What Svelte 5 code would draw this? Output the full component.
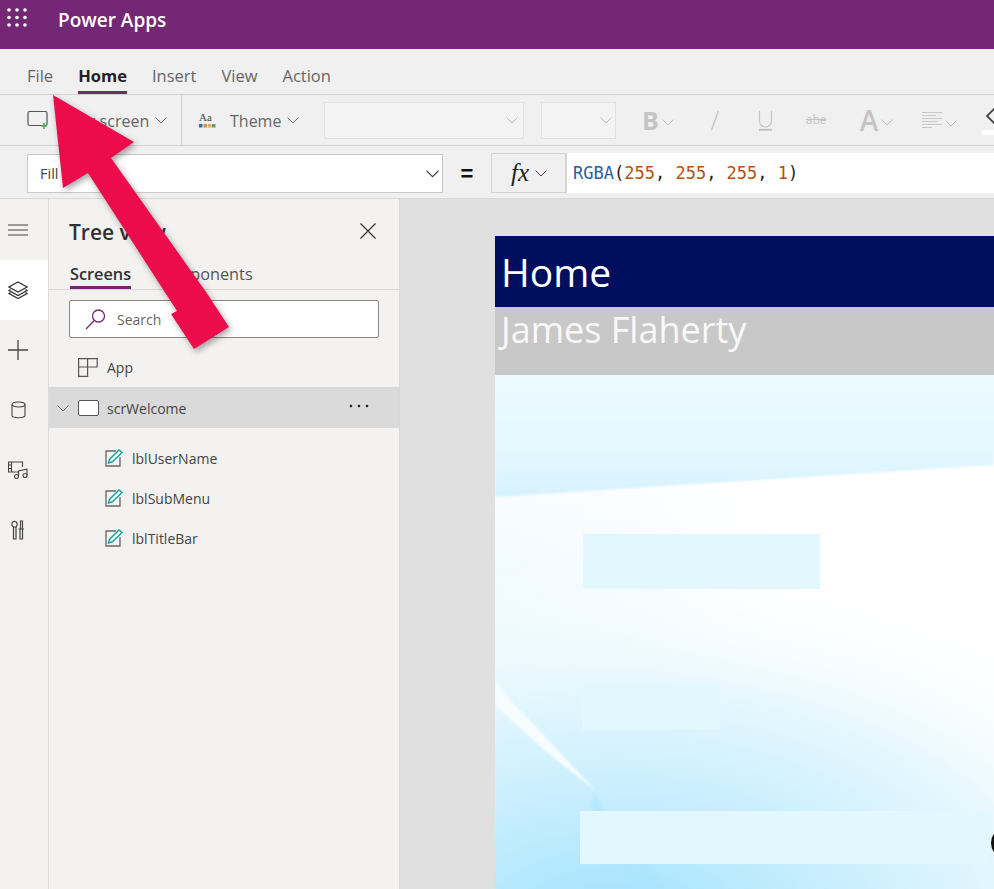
<script>
	const tabs = ['File', 'Home', 'Insert', 'View', 'Action'];
	const labels = ['lblUserName', 'lblSubMenu', 'lblTitleBar'];
	const dots = [0, 1, 2];
</script>

<div class="page">
	<header class="topbar">
		<svg class="launcher" width="20" height="20" viewBox="0 0 20 20">
			{#each dots as r}
				{#each dots as c}
					<circle cx={2 + c * 8} cy={2 + r * 7.500} r="1.800" fill="#fff" />
				{/each}
			{/each}
		</svg>
		<span class="brand">Power Apps</span>
	</header>

	<nav class="tabs">
		{#each tabs as tab}
			<span class="tab" class:active={tab === 'Home'}>{tab}</span>
		{/each}
	</nav>

	<div class="toolbar">
		<div class="group first">
			<svg width="22" height="20" viewBox="0 0 22 20" fill="none">
				<rect x="1" y="1.500" width="19" height="14" rx="1.500" stroke="#555" stroke-width="1.200" />
				<path d="M17 13v6M14 16h6" stroke="#4caf50" stroke-width="1.600" />
			</svg>
			<span class="label newscreen">New screen</span>
			<svg class="chev" width="12" height="7" viewBox="0 0 12 7"><path d="M.5.5 6 6l5.500-5.500" /></svg>
		</div>
		<div class="group second">
			<svg width="17" height="18" viewBox="0 0 17 18">
				<text x="0" y="10" class="aa">Aa</text>
				<rect x="0" y="13" width="3.500" height="3.500" fill="#3c6db0" />
				<rect x="4.500" y="13" width="3.500" height="3.500" fill="#d98f45" />
				<rect x="9" y="13" width="3.500" height="3.500" fill="#e0a860" />
				<rect x="13" y="13" width="3.500" height="3.500" fill="#5c9a7c" />
			</svg>
			<span class="label theme">Theme</span>
			<svg class="chev" width="12" height="7" viewBox="0 0 12 7"><path d="M.5.5 6 6l5.500-5.500" /></svg>
		</div>
		<div class="select wide">
			<svg class="chev light" width="12" height="7" viewBox="0 0 12 7"><path d="M.5.5 6 6l5.500-5.500" /></svg>
		</div>
		<div class="select narrow">
			<svg class="chev light" width="12" height="7" viewBox="0 0 12 7"><path d="M.5.5 6 6l5.500-5.500" /></svg>
		</div>
		<span class="fmt bold">B</span>
		<svg class="chev light after-b" width="12" height="7" viewBox="0 0 12 7"><path d="M.5.5 6 6l5.500-5.500" /></svg>
		<svg class="italic" width="10" height="21" viewBox="0 0 10 21"><path d="M8.500 1 1.500 20" stroke="#c4c4c4" stroke-width="1.400" /></svg>
		<svg class="under" width="15" height="21" viewBox="0 0 15 21" fill="none">
			<path d="M1.500 1v10a6 6 0 0 0 12 0V1" stroke="#c4c4c4" stroke-width="1.200" />
			<path d="M1 19.800h13" stroke="#bdbdbd" stroke-width="1.800" />
		</svg>
		<span class="fmt abe">abe</span>
		<span class="fmt big-a">A</span>
		<svg class="chev light after-a" width="12" height="7" viewBox="0 0 12 7"><path d="M.5.5 6 6l5.500-5.500" /></svg>
		<svg class="align" width="21" height="16" viewBox="0 0 21 16">
			<path d="M0 .5h20M0 3.500h14M0 6.500h20M0 9.500h16M0 12.500h20M0 15.500h10" stroke="#c8c8c8" />
		</svg>
		<svg class="chev light after-align" width="12" height="7" viewBox="0 0 12 7"><path d="M.5.5 6 6l5.500-5.500" /></svg>
		<div class="fill-icon">
			<svg width="10" height="22" viewBox="0 0 10 22" fill="none">
				<path d="M9 1 1 9l8 8" stroke="#444" stroke-width="1.800" />
			</svg>
			<span class="fill-swatch"></span>
		</div>
	</div>

	<div class="formula">
		<div class="prop">
			<span>Fill</span>
			<svg class="chev dark" width="13" height="8" viewBox="0 0 12 7"><path d="M.5.5 6 6l5.500-5.500" /></svg>
		</div>
		<span class="equals">=</span>
		<div class="fx">
			<i>fx</i>
			<svg class="chev dark" width="12" height="7" viewBox="0 0 12 7"><path d="M.5.5 6 6l5.500-5.500" /></svg>
		</div>
		<div class="code">
			<span class="fn">RGBA</span>(<span class="num">255</span>, <span class="num">255</span>, <span class="num">255</span>, <span class="num">1</span>)
		</div>
	</div>

	<div class="workspace">
		<aside class="rail">
			<div class="rail-item">
				<svg width="20" height="12" viewBox="0 0 20 12"><path d="M0 1h20M0 6h20M0 11h20" stroke="#444" /></svg>
			</div>
			<div class="rail-item current">
				<svg width="20" height="18" viewBox="0 0 20 18" fill="none" stroke="#333" stroke-width="1.200">
					<path d="m10 1 9 5-9 5-9-5z" />
					<path d="m2.500 8.500-1.500 1 9 5 9-5-1.500-1" />
					<path d="m2.500 11.500-1.500 1 9 5 9-5-1.500-1" />
				</svg>
			</div>
			<div class="rail-item">
				<svg width="20" height="20" viewBox="0 0 20 20"><path d="M10 0v20M0 10h20" stroke="#444" stroke-width="1.300" /></svg>
			</div>
			<div class="rail-item">
				<svg width="15" height="18" viewBox="0 0 15 18" fill="none" stroke="#444" stroke-width="1.100">
					<path d="M1 3.500v11c0 3 13 3 13 0v-11" />
					<ellipse cx="7.500" cy="3.500" rx="6.500" ry="2.500" />
				</svg>
			</div>
			<div class="rail-item">
				<svg width="20" height="18" viewBox="0 0 20 18" fill="none" stroke="#444" stroke-width="1.100">
					<path d="M10 11H.5V1h14v5" />
					<path d="M3.500 1v10M.5 4h3M.5 7.500h3" />
					<path d="M10.500 15.500V10l8.500-1.800v6" />
					<circle cx="8.500" cy="15.500" r="2" />
					<circle cx="17" cy="14.500" r="2" />
				</svg>
			</div>
			<div class="rail-item">
				<svg width="14" height="20" viewBox="0 0 14 20" fill="none" stroke="#444" stroke-width="1.200">
					<path d="M2.500 7V19h2.500V7" />
					<path d="M1 3a2.800 2.800 0 0 1 5 0v2.500l-1 1.500H2.500L1 5.500z" />
					<path d="M9 9v10h2.500V9M7.500 9h5.500M9.500 9V1h2v8" />
				</svg>
			</div>
		</aside>

		<section class="panel">
			<div class="panel-head">
				<h2>Tree view</h2>
				<svg class="close" width="18" height="18" viewBox="0 0 18 18"><path d="m1.500 1.500 15 15M16.500 1.500l-15 15" stroke="#333" stroke-width="1.200" /></svg>
			</div>
			<div class="panel-tabs">
				<span class="ptab on">Screens</span>
				<span class="ptab">Components</span>
			</div>
			<div class="search">
				<svg width="22" height="22" viewBox="0 0 22 22" fill="none" stroke="#742774" stroke-width="1.300">
					<circle cx="13.500" cy="8" r="6" />
					<path d="M9.300 12.500 1 21" />
				</svg>
				<span>Search</span>
			</div>
			<div class="row app">
				<svg width="20" height="19" viewBox="0 0 20 19" fill="none" stroke="#555" stroke-width="1.200">
					<path d="M.6.6h9v17.800h-9zM.6 9h18.600V.6H9.600" />
				</svg>
				<span>App</span>
			</div>
			<div class="row screen">
				<svg class="chev" width="12" height="7" viewBox="0 0 12 7"><path d="M.5.5 6 6l5.500-5.500" /></svg>
				<span class="screen-box"></span>
				<span>scrWelcome</span>
				<svg class="more" width="20" height="4" viewBox="0 0 20 4">
					<circle cx="2" cy="2" r="1.300" fill="#222" />
					<circle cx="10" cy="2" r="1.300" fill="#222" />
					<circle cx="18" cy="2" r="1.300" fill="#222" />
				</svg>
			</div>
			<ul class="children">
				{#each labels as name}
					<li>
						<svg width="18" height="18" viewBox="0 0 18 18" fill="none">
							<path d="M11 2H1v15h14V8" stroke="#666" stroke-width="1.300" />
							<path d="m3.500 14 1-3.500L14 1l3 2.500L7 13z" stroke="#1ba39c" stroke-width="1.500" fill="#fff" />
						</svg>
						<span>{name}</span>
					</li>
				{/each}
			</ul>
		</section>

		<main class="canvas">
			<div class="preview">
				<div class="title">Home</div>
				<div class="user">James Flaherty</div>
				<div class="body">
					<svg class="backdrop" width="499" height="514" viewBox="0 0 499 514" preserveAspectRatio="none">
						<defs>
							<linearGradient id="band" x1="0" y1="0" x2="0" y2="1">
								<stop offset="0" stop-color="#ebfaff" />
								<stop offset="0.6" stop-color="#e6f8ff" />
								<stop offset="1" stop-color="#d6f2fd" />
							</linearGradient>
							<radialGradient id="corner" gradientUnits="userSpaceOnUse" cx="90" cy="555" r="490" gradientTransform="translate(0 135) scale(1.300 .75)">
								<stop offset="0" stop-color="#9fe2fe" />
								<stop offset="0.3" stop-color="#c2ecfd" />
								<stop offset="0.65" stop-color="#e6f7fe" />
								<stop offset="1" stop-color="#ffffff" stop-opacity="0" />
							</radialGradient>
							<linearGradient id="side" x1="0" y1="0" x2="1" y2="0">
								<stop offset="0" stop-color="#e9f8ff" />
								<stop offset="0.5" stop-color="#f3fbff" />
								<stop offset="1" stop-color="#ffffff" stop-opacity="0" />
							</linearGradient>
							<linearGradient id="side-fade" x1="0" y1="0" x2="0" y2="1">
								<stop offset="0" stop-color="#fff" stop-opacity="0.7" />
								<stop offset="0.4" stop-color="#fff" stop-opacity="0" />
							</linearGradient>
							<filter id="soft"><feGaussianBlur stdDeviation="1.500" /></filter>
							<filter id="edge"><feGaussianBlur stdDeviation="0.800" /></filter>
						</defs>
						<rect width="499" height="514" fill="#fff" />
						<rect y="115" width="300" height="399" fill="url(#side)" />
						<rect y="115" width="300" height="399" fill="url(#side-fade)" />
						<rect width="499" height="514" fill="url(#corner)" />
						<polygon points="-5,-5 504,-5 499,90 250,106 0,122" fill="url(#band)" filter="url(#edge)" />
						<polygon points="0,305 20,330 60,372 100,415 50,376 0,330" fill="#f6fcff" filter="url(#edge)" />
						<polygon points="100,420 170,514 140,514 95,430" fill="#a8e4fe" opacity="0.45" filter="url(#soft)" />
					</svg>
					<div class="block one"></div>
					<div class="block two"></div>
					<div class="block three"></div>
					<span class="blob"></span>
				</div>
			</div>
		</main>
	</div>

	<svg class="arrow" width="260" height="380" viewBox="0 0 260 380">
		<polygon points="53,95 134,142 111,158 206,292 229,327 194,349 171,314 177,311 88,173 63,188" fill="#ec0c4c" />
	</svg>
</div>

<style>
	:global(body) {
		margin: 0;
		background: #f3f2f1;
	}

	.page {
		position: relative;
		width: 994px;
		height: 889px;
		overflow: hidden;
		font-family: "Open Sans", "Noto Sans", sans-serif;
		color: #333;
		display: flex;
		flex-direction: column;
	}

	.topbar {
		height: 49px;
		flex: none;
		background: #742774;
		display: flex;
		align-items: flex-start;
		color: #fff;
	}

	.launcher {
		margin: 8px 0 0 7px;
	}

	.brand {
		margin: 7px 0 0 31px;
		font-size: 19px;
		font-weight: 600;
		line-height: 26px;
	}

	.tabs {
		height: 45px;
		flex: none;
		background: #f0f0f0;
		border-bottom: 1px solid #d2d2d2;
		display: flex;
		padding-left: 27px;
		gap: 25px;
	}

	.tab {
		height: 28px;
		margin-top: 14px;
		font-size: 16.500px;
		line-height: 25px;
		color: #666;
		border-bottom: 3px solid transparent;
	}

	.tab.active {
		color: #222;
		font-weight: 700;
		border-bottom-color: #742774;
	}

	.toolbar {
		height: 50px;
		flex: none;
		background: #f0f0f0;
		border-bottom: 1px solid #d2d2d2;
		display: flex;
		align-items: center;
	}

	.toolbar > * {
		flex: none;
	}

	.group {
		height: 100%;
		display: flex;
		align-items: center;
		box-sizing: border-box;
	}

	.group.first {
		width: 182px;
		padding-left: 27px;
		border-right: 1px solid #d2d2d2;
	}

	.group.second {
		width: 142px;
		padding-left: 17px;
	}

	.label {
		font-size: 16px;
		line-height: 24px;
		padding-top: 2px;
		color: #666;
	}

	.newscreen {
		margin: 0 6px 0 13px;
	}

	.theme {
		margin: 0 6px 0 14px;
	}

	.chev {
		flex: none;
		fill: none;
		stroke: #777;
		stroke-width: 1;
	}

	.chev.light {
		stroke: #bdbdbd;
	}

	.chev.dark {
		stroke: #444;
	}

	.select {
		height: 37px;
		box-sizing: border-box;
		border: 1px solid #e2e2e2;
		background: #f3f3f3;
		display: flex;
		align-items: center;
		justify-content: flex-end;
		padding-right: 5px;
	}

	.wide {
		width: 200px;
	}

	.narrow {
		width: 75px;
		margin-left: 17px;
		padding-right: 3px;
	}

	.fmt {
		color: #c4c4c4;
		line-height: 1;
	}

	.bold {
		margin-left: 26px;
		font-size: 25px;
		font-weight: 700;
	}

	.after-b {
		margin: 4px 0 0 3px;
	}

	.italic {
		margin-left: 36px;
	}

	.under {
		margin-left: 38px;
	}

	.abe {
		margin-left: 33px;
		width: 20px;
		font-size: 12px;
		text-decoration: line-through;
	}

	.big-a {
		margin-left: 34px;
		font-size: 28px;
		font-weight: 600;
	}

	.after-a {
		margin: 4px 0 0 3px;
	}

	.align {
		margin-left: 29px;
	}

	.after-align {
		margin: 6px 0 0 2px;
	}

	.aa {
		font-family: "Liberation Serif", serif;
		font-size: 11px;
		fill: #444;
	}

	.fill-icon {
		margin-left: 29px;
		display: flex;
		flex-direction: column;
		width: 20px;
		height: 34px;
		align-self: flex-start;
		margin-top: 12px;
	}

	.fill-swatch {
		display: block;
		height: 5px;
		margin: 1px 0 0 -4px;
		background: #fff;
	}

	.formula {
		height: 52px;
		flex: none;
		background: #f0f0f0;
		border-bottom: 1px solid #d8d8d8;
		display: flex;
		align-items: center;
	}

	.prop {
		width: 416px;
		height: 39px;
		margin: 3px 0 0 27px;
		box-sizing: border-box;
		background: #fff;
		border: 1px solid #c8c8c8;
		display: flex;
		align-items: center;
		justify-content: space-between;
		padding: 0 3px 0 12px;
		font-size: 14.500px;
		color: #444;
	}

	.equals {
		width: 48px;
		margin-top: 4px;
		text-align: center;
		font: 700 22px "Liberation Sans", sans-serif;
		color: #111;
	}

	.fx {
		width: 75px;
		height: 40px;
		margin-top: 2px;
		box-sizing: border-box;
		border: 1px solid #d4d4d4;
		background: #f0f0f0;
		display: flex;
		align-items: center;
		padding-left: 19px;
		gap: 6px;
	}

	.fx i {
		font: italic 25px "Liberation Serif", serif;
		color: #222;
	}

	.code {
		flex: 1;
		height: 40px;
		margin-top: 2px;
		background: #fff;
		border-left: 1px solid #d4d4d4;
		padding-left: 6px;
		font: 17px/41px "DejaVu Sans Mono", monospace;
		color: #222;
		white-space: pre;
	}

	.fn {
		color: #2b5e9f;
	}

	.num {
		color: #b9500c;
	}

	.workspace {
		flex: 1;
		display: flex;
		min-height: 0;
	}

	.rail {
		width: 48px;
		flex: none;
		background: #f3f2f1;
		border-right: 1px solid #dcdcdc;
		padding-top: 1px;
	}

	.rail-item {
		height: 60px;
		display: flex;
		align-items: center;
		justify-content: center;
		padding-right: 12px;
	}

	.rail-item.current {
		background: #fff;
	}

	.panel {
		width: 350px;
		flex: none;
		background: #f3f2f1;
		border-right: 1px solid #d8d8d8;
	}

	.panel-head {
		display: flex;
		justify-content: space-between;
		align-items: center;
		height: 64px;
		box-sizing: border-box;
		padding: 2px 22px 0 20px;
	}

	.close {
		margin-top: -3px;
	}

	h2 {
		margin: 0;
		font-size: 21px;
		font-weight: 600;
		color: #323130;
	}

	.panel-tabs {
		height: 26px;
		display: flex;
		gap: 24px;
		padding-left: 21px;
		border-bottom: 1px solid #d8d8d8;
	}

	.ptab {
		font-size: 16.300px;
		line-height: 23px;
		color: #555;
		height: 23px;
	}

	.ptab.on {
		color: #323130;
		font-weight: 600;
		border-bottom: 3px solid #742774;
	}

	.search {
		height: 38px;
		margin: 10px 20px 0;
		box-sizing: border-box;
		background: #fff;
		border: 1px solid #8a8886;
		border-radius: 2px;
		display: flex;
		align-items: center;
		padding-left: 15px;
		gap: 10px;
		font-size: 14px;
		color: #666;
	}

	.row {
		display: flex;
		align-items: center;
		font-size: 14px;
		color: #444;
	}

	.app {
		height: 49px;
		box-sizing: border-box;
		padding: 10px 0 0 29px;
		gap: 9px;
	}

	.screen {
		height: 41px;
		box-sizing: border-box;
		background: #dadada;
		padding: 1px 0 0 8px;
	}

	.screen .chev {
		margin-right: 9px;
	}

	.screen-box {
		width: 19px;
		height: 14px;
		border: 1px solid #555;
		border-radius: 2px;
		background: #fff;
		margin-right: 8px;
	}

	.more {
		margin-left: auto;
		margin-right: 30px;
		margin-bottom: 4px;
	}

	.children {
		list-style: none;
		margin: 10px 0 0;
		padding: 0;
	}

	.children li {
		height: 40px;
		display: flex;
		align-items: center;
		gap: 9px;
		padding-left: 56px;
		font-size: 14px;
		color: #444;
	}

	.canvas {
		flex: 1;
		background: #e0e0e0;
		padding: 37px 0 0 95px;
		overflow: hidden;
	}

	.preview {
		width: 499px;
	}

	.title {
		height: 71px;
		background: #000e5e;
		color: #fff;
		font-size: 39px;
		line-height: 72px;
		padding-left: 6px;
		box-sizing: border-box;
	}

	.user {
		height: 68px;
		background: #c8c8c8;
		color: #f8f8f8;
		font-size: 36px;
		line-height: 45px;
		padding-left: 6px;
		box-sizing: border-box;
	}

	.body {
		position: relative;
		height: 514px;
		display: flex;
		flex-direction: column;
		align-items: flex-start;
	}

	.backdrop {
		position: absolute;
		inset: 0;
	}

	.block {
		position: relative;
		background: #e3f7ff;
	}

	.one {
		width: 237px;
		height: 55px;
		margin: 159px 0 0 88px;
	}

	.two {
		width: 138px;
		height: 45px;
		margin: 96px 0 0 87px;
	}

	.three {
		width: 409px;
		height: 53px;
		margin: 81px 0 0 85px;
	}

	.blob {
		position: absolute;
		left: 496px;
		top: 455px;
		width: 20px;
		height: 26px;
		border-radius: 50%;
		background: #111;
	}

	.arrow {
		position: absolute;
		left: 0;
		top: 0;
		filter: drop-shadow(2px 3px 3px rgba(0, 0, 0, 0.35));
	}
</style>
